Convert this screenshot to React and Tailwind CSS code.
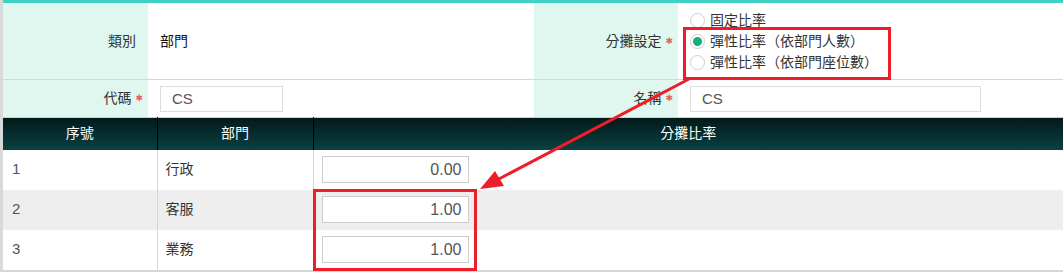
import { useState } from 'react'

const font = { fontFamily: '"Liberation Sans", "Noto Sans CJK TC", sans-serif' }

function Req() {
  return <span className="ml-[4px] text-[9px] leading-none text-[#e36262] font-['DejaVu_Sans']">✱</span>
}

// full-width brackets, kept at one em like the original rendering
function Paren({ text }) {
  const open = text.indexOf('（')
  if (open < 0) return text
  const close = text.indexOf('）')
  return (
    <>
      {text.slice(0, open)}
      <span className="inline-block w-[14px] text-center">（</span>
      {text.slice(open + 1, close)}
      <span className="inline-block w-[14px] text-center">）</span>
    </>
  )
}

function Radio({ checked, label, onClick }) {
  return (
    <label className="flex h-[21px] items-center cursor-pointer" onClick={onClick}>
      <span className="ml-[12px] mr-[5px] flex h-[15px] w-[15px] items-center justify-center rounded-full border border-[#cfcfcf] bg-white">
        {checked && <span className="h-[9px] w-[9px] rounded-full bg-[#13b07a]" />}
      </span>
      <span className="text-[14px] text-[#333]">
        <Paren text={label} />
      </span>
    </label>
  )
}

const rows = [
  { no: 1, dept: '行政', ratio: '0.00' },
  { no: 2, dept: '客服', ratio: '1.00' },
  { no: 3, dept: '業務', ratio: '1.00' },
]

export default function App() {
  const [mode, setMode] = useState(1)
  const opts = ['固定比率', '彈性比率（依部門人數）', '彈性比率（依部門座位數）']

  return (
    <div className="relative h-[272px] w-[1063px] overflow-hidden bg-white" style={font}>
      <div className="border-l-[3px] border-[#d9d9d9]">
        <div className="h-[3px] bg-[#3fd1c6]" />

        {/* form */}
        <div className="grid grid-cols-[145px_386px_144px_1fr]">
          <div className="flex h-[77px] items-center justify-end bg-[#e0f7ef] pr-[12px] text-[14px] text-[#333] border-b border-[#d6d6d6]">
            類別
          </div>
          <div className="flex h-[77px] items-center pl-[12px] text-[14px] text-[#111] border-b border-[#d6d6d6]">
            部門
          </div>
          <div className="flex h-[77px] items-center justify-end bg-[#e0f7ef] pr-[5px] text-[14px] text-[#333] border-b border-[#d6d6d6]">
            分攤設定
            <Req />
          </div>
          <div className="flex h-[77px] flex-col justify-center border-b border-[#d6d6d6]">
            {opts.map((o, i) => (
              <Radio key={o} label={o} checked={mode === i} onClick={() => setMode(i)} />
            ))}
          </div>

          <div className="flex h-[37px] items-center justify-end bg-[#e0f7ef] pr-[5px] text-[14px] text-[#333]">
            代碼
            <Req />
          </div>
          <div className="flex h-[37px] items-center pl-[12px]">
            <input
              defaultValue="CS"
              className="h-[26px] w-[123px] border border-[#dcdcdc] px-[11px] text-[15px] text-[#555] outline-none"
            />
          </div>
          <div className="flex h-[37px] items-center justify-end bg-[#e0f7ef] pr-[5px] text-[14px] text-[#333]">
            名稱
            <Req />
          </div>
          <div className="flex h-[37px] items-center pl-[12px]">
            <input
              defaultValue="CS"
              className="h-[26px] w-[291px] border border-[#dcdcdc] px-[11px] text-[15px] text-[#555] outline-none"
            />
          </div>
        </div>

        {/* grid */}
        <table className="w-full border-collapse border-t border-[#cfcfcf] text-[14px]">
          <thead>
            <tr className="h-[32px] bg-gradient-to-b from-[#041a1a] to-[#0a4141] text-white">
              <th className="w-[154px] border-r border-[#000] font-normal">序號</th>
              <th className="w-[156px] border-r border-[#000] font-normal">部門</th>
              <th className="font-normal">分攤比率</th>
            </tr>
          </thead>
          <tbody>
            {rows.map((r, i) => (
              <tr key={r.no} className={'h-[40px] ' + (i % 2 === 1 ? 'bg-[#eeeeee]' : 'bg-white')}>
                <td className="border-r border-[#d6d6d6] pl-[9px] text-[15px] text-[#555]">{r.no}</td>
                <td className="border-r border-[#d6d6d6] pl-[8px] text-[#333]">{r.dept}</td>
                <td className="pl-[8px]">
                  <input
                    defaultValue={r.ratio}
                    className="block h-[27px] w-[147px] border border-[#cccccc] bg-white px-[6px] text-right text-[16px] text-[#555] outline-none"
                  />
                </td>
              </tr>
            ))}
          </tbody>
        </table>
        <div className="h-[2px] bg-[#d6d6d6]" />
      </div>

      {/* annotations */}
      <div className="pointer-events-none absolute left-[683px] top-[27px] h-[53px] w-[208px] border-[3px] border-[#ee1d2a]" />
      <div className="pointer-events-none absolute left-[313px] top-[189px] h-[82px] w-[164px] border-[3px] border-[#ee1d2a]" />
      <svg className="pointer-events-none absolute left-0 top-0" width="1063" height="272">
        <line x1="689" y1="79" x2="497" y2="180" stroke="#ee1d2a" strokeWidth="3" />
        <polygon points="480,189 495,171 504,186" fill="#ee1d2a" />
      </svg>
    </div>
  )
}
